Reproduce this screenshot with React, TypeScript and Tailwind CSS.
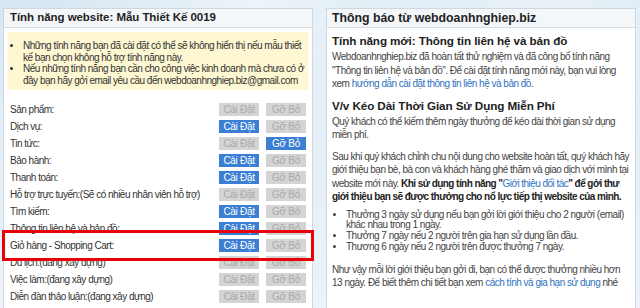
import React from "react";

const rows: { label: string; install: boolean; remove: boolean }[] = [
  { label: "Sản phẩm:", install: false, remove: false },
  { label: "Dịch vụ:", install: true, remove: false },
  { label: "Tin tức:", install: false, remove: true },
  { label: "Bảo hành:", install: true, remove: false },
  { label: "Thanh toán:", install: true, remove: false },
  { label: "Hỗ trợ trực tuyến:(Sẽ có nhiều nhân viên hỗ trợ)", install: false, remove: false },
  { label: "Tìm kiếm:", install: true, remove: false },
  { label: "Thông tin liên hệ và bản đồ:", install: true, remove: false },
  { label: "Giỏ hàng - Shopping Cart:", install: true, remove: false },
  { label: "Du lịch:(đang xây dựng)", install: false, remove: false },
  { label: "Việc làm:(đang xây dựng)", install: false, remove: false },
  { label: "Diễn đàn thảo luận:(đang xây dựng)", install: false, remove: false },
];

function Btn({ on, children }: { on: boolean; children: React.ReactNode }) {
  return (
    <div
      className={
        "w-[40px] h-[13px] flex items-center justify-center text-[10px] leading-none tracking-[-0.3px] " +
        (on ? "bg-[#3a7fd3] text-white" : "bg-[#d4d4d4] text-[#a9a9a9]")
      }
    >
      {children}
    </div>
  );
}

export default function App() {
  return (
    <div
      className="w-[640px] h-[308px] overflow-hidden relative bg-[linear-gradient(180deg,#d6e6f2_0%,#e3eef6_40%,#edf3f8_100%)] text-[#333] pt-[8px] flex items-start"
      style={{ fontFamily: '"Liberation Sans", Arial, sans-serif' }}
    >
      <div className="absolute inset-0 bg-[radial-gradient(ellipse_at_40%_0%,rgba(255,255,255,0.55),transparent_40%),radial-gradient(ellipse_at_85%_5%,rgba(255,255,255,0.5),transparent_30%)] pointer-events-none" />

      {/* Left panel */}
      <div className="relative ml-[3px] w-[310px] h-[320px] border border-[#cfd8df] bg-white">
        <div className="h-[19px] bg-[#f4f7fa] border-b border-[#d5dde3] flex items-center px-[6px]">
          <span className="text-[11.5px] font-bold text-[#222] tracking-[-0.05px]">Tính năng website: Mẫu Thiết Kế 0019</span>
        </div>
        <div className="px-[4px] pt-[4px]">
          <div className="bg-[#fdf7d2] h-[58px] pt-[8px] pl-[7px] pr-[4px] text-[10px] leading-[11.5px] tracking-[-0.5px] text-[#333]">
            <ul className="list-disc pl-[8px]">
              <li>Những tính năng bạn đã cài đặt có thể sẽ không hiển thị nếu mẫu thiết kế bạn chọn không hỗ trợ tính năng này.</li>
              <li>Nếu những tính năng bạn cần cho công việc kinh doanh mà chưa có ở đây bạn hãy gởi email yêu cầu đến webdoanhnghiep.biz@gmail.com</li>
            </ul>
          </div>
          <div className="mt-[11px] flex flex-col">
            {rows.map((r) => (
              <div key={r.label} className="h-[17px] flex items-center pl-[2px] pr-[2px]">
                <span className="flex-1 text-[10px] tracking-[-0.5px] text-[#333] whitespace-nowrap">{r.label}</span>
                <div className="flex gap-[7px]">
                  <Btn on={r.install}>Cài Đặt</Btn>
                  <Btn on={r.remove}>Gỡ Bỏ</Btn>
                </div>
              </div>
            ))}
          </div>
        </div>
        <div className="absolute left-[-2px] top-[221px] w-[312px] h-[31px] border-[3px] border-[#e8000b]" />
      </div>

      {/* Right panel */}
      <div className="relative ml-[13px] w-[310px] h-[320px] border border-[#cfd8df] bg-white">
        <div className="h-[19px] bg-[#f4f7fa] border-b border-[#d5dde3] flex items-center px-[5px]">
          <span className="text-[12.3px] font-bold text-[#222]">Thông báo từ webdoanhnghiep.biz</span>
        </div>
        <div className="px-[5px] pt-[6px] text-[10px] leading-[13.5px] tracking-[-0.5px] text-[#444]">
          <div className="text-[11.7px] font-bold text-[#222] leading-[14px] tracking-[-0.1px]">Tính năng mới: Thông tin liên hệ và bản đồ</div>
          <p className="mt-[2px]">
            Webdoanhnghiep.biz đã hoàn tất thử nghiệm và đã công bố tính năng "Thông tin liên hệ và bản đồ". Để cài đặt tính năng mới này, bạn vui lòng xem{" "}
            <span className="text-[#2f74c0]">hướng dẫn cài đặt thông tin liên hệ và bản đồ</span>.
          </p>
          <div className="mt-[8px] text-[11.7px] font-bold text-[#222] leading-[14px] tracking-[-0.1px]">V/v Kéo Dài Thời Gian Sử Dụng Miễn Phí</div>
          <p className="mt-[2px]">Quý khách có thể kiếm thêm ngày thưởng để kéo dài thời gian sử dụng miễn phí.</p>
          <p className="mt-[8px]">
            Sau khi quý khách chỉnh chu nội dung cho website hoàn tất, quý khách hãy giới thiệu bạn bè, bà con và khách hàng ghé thăm và giao dịch với mình tại website mới này.{" "}
            <b className="text-[#222] tracking-[-0.55px]">
              Khi sử dụng tính năng "<span className="text-[#2f74c0] font-normal">Giới thiệu đối tác</span>" để gởi thư giới thiệu bạn sẽ được thưởng cho nổ lực tiếp thị website của mình.
            </b>
          </p>
          <ul className="list-disc pl-[13px] ml-[1px] mt-[6px] leading-[10.8px]">
            <li>Thưởng 3 ngày sử dụng nếu bạn gởi lời giới thiệu cho 2 người (email) khác nhau trong 1 ngày.</li>
            <li>Thưởng 7 ngày nếu 2 người trên gia hạn sử dụng lần đầu.</li>
            <li>Thương 6 ngày nếu 2 người trên được thưởng 7 ngày.</li>
          </ul>
          <p className="mt-[10px]">
            Như vậy mỗi lời giới thiệu bạn gởi đi, bạn có thể được thưởng nhiều hơn 13 ngày. Để biết thêm chi tiết bạn xem{" "}
            <span className="text-[#2f74c0]">cách tính và gia hạn sử dụng</span> nhé
          </p>
        </div>
      </div>
    </div>
  );
}
